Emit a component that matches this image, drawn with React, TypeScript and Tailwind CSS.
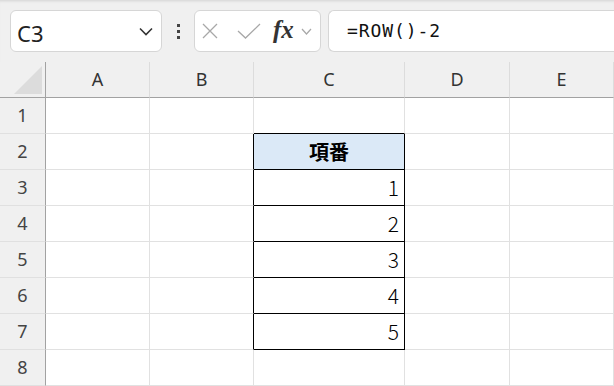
import React from 'react';

// ---------- constants ----------

const COLS = ['A', 'B', 'C', 'D', 'E'];
const ROWS = [1, 2, 3, 4, 5, 6, 7, 8];
const UI_FONT = { fontFamily: '"Noto Sans", "Open Sans", sans-serif' };
const JP_FONT = { fontFamily: '"Noto Sans CJK JP", "Noto Sans", sans-serif' };

// table sits in column C, rows 2..7
const TABLE: Record<number, string> = { 2: '項番', 3: '1', 4: '2', 5: '3', 6: '4', 7: '5' };

function inTable(row: number) {
  return row >= 2 && row <= 7;
}

// ---------- toolbar ----------

function Toolbar() {
  return (
    <div className="h-[62px] flex items-start pt-[10px] pl-[10px] gap-0 bg-[#f0f0f0] shadow-[inset_0_3px_3px_-2px_rgba(0,0,0,0.12)]">
      {/* name box */}
      <div className="w-[152px] h-[42px] bg-white border border-[#d6d6d6] rounded-[6px] flex items-center pl-[6px] pr-[8px]">
        <span className="text-[22px] text-[#222] leading-none pt-[3px]" style={UI_FONT}>
          C3
        </span>
        <svg className="ml-auto" width="14" height="9" viewBox="0 0 14 9">
          <path d="M1 1.5 L7 7.5 L13 1.5" fill="none" stroke="#333" strokeWidth="1.6" />
        </svg>
      </div>

      {/* more dots */}
      <div className="w-[32px] h-[42px] flex flex-col items-center justify-center gap-[3px]">
        <span className="w-[3px] h-[3px] bg-[#444]" />
        <span className="w-[3px] h-[3px] bg-[#444]" />
        <span className="w-[3px] h-[3px] bg-[#444]" />
      </div>

      {/* cancel / enter / fx */}
      <div className="w-[127px] h-[42px] bg-white border border-[#d6d6d6] rounded-[6px] flex items-center pl-[7px]">
        <svg width="16" height="16" viewBox="0 0 16 16">
          <path d="M1 1 L15 15 M15 1 L1 15" stroke="#a8a8a8" strokeWidth="1.3" />
        </svg>
        <svg className="ml-[19px]" width="24" height="16" viewBox="0 0 24 16">
          <path d="M1 8 L8.5 15 L23 1" fill="none" stroke="#a8a8a8" strokeWidth="1.3" />
        </svg>
        <span
          className="ml-[12px] text-[25px] italic font-bold text-[#333] leading-none -mt-[3px]"
          style={{ fontFamily: '"Liberation Serif", "DejaVu Serif", serif' }}
        >
          fx
        </span>
        <svg className="ml-[7px]" width="11" height="7" viewBox="0 0 11 7">
          <path d="M1 1 L5.5 6 L10 1" fill="none" stroke="#a8a8a8" strokeWidth="1.2" />
        </svg>
      </div>

      {/* formula bar */}
      <div className="ml-[7px] flex-1 h-[42px] bg-white border border-[#d6d6d6] border-r-0 rounded-l-[6px] flex items-center pl-[18px]">
        <span
          className="text-[18px] tracking-[0.9px] text-[#111] leading-none"
          style={{ fontFamily: '"DejaVu Sans Mono", "Liberation Mono", monospace' }}
        >
          =ROW()-2
        </span>
      </div>
    </div>
  );
}

// ---------- grid ----------

function Corner() {
  return (
    <div className="h-[36px] bg-[#f0f0f0] border-r border-b border-[#a2a2a2] flex items-end justify-end pr-[3px] pb-[3px]">
      <svg width="28" height="28" viewBox="0 0 28 28">
        <path d="M28 0 L28 28 L0 28 Z" fill="#dcdcdc" />
      </svg>
    </div>
  );
}

function Sheet() {
  return (
    <div
      className="grid bg-white"
      style={{ gridTemplateColumns: '46px 104px 104px 151px 105px 1fr' }}
    >
      <Corner />
      {COLS.map((c) => (
        <div
          key={c}
          className="h-[36px] bg-[#f0f0f0] border-b border-b-[#a2a2a2] border-r border-r-[#dcdcdc] flex items-center justify-center text-[18px] text-[#333]"
          style={UI_FONT}
        >
          {c}
        </div>
      ))}

      {ROWS.map((r) => (
        <React.Fragment key={r}>
          <div
            className="h-[36px] bg-[#f0f0f0] border-r border-r-[#a2a2a2] border-b border-b-[#e0e0e0] flex items-center justify-center text-[18px] text-[#444]"
            style={UI_FONT}
          >
            {r}
          </div>
          {COLS.map((c) => {
            // table borders go black
            let cls = 'h-[36px] border-r border-b border-[#e1e1e1]';
            if (c === 'B' && inTable(r)) cls = 'h-[36px] border-b border-b-[#e1e1e1] border-r border-r-black';
            if (c === 'C' && r === 1) cls = 'h-[36px] border-r border-r-[#e1e1e1] border-b border-b-black';
            if (c === 'C' && inTable(r)) {
              const head = r === 2;
              return (
                <div
                  key={c}
                  className={`h-[36px] border-r border-b border-black flex items-center ${
                    head ? 'justify-center bg-[#dbe9f7] font-bold text-[20px]' : 'justify-end pr-[5px] text-[21px] font-light'
                  } text-black`}
                  style={JP_FONT}
                >
                  {TABLE[r]}
                </div>
              );
            }
            return <div key={c} className={cls} />;
          })}
        </React.Fragment>
      ))}
    </div>
  );
}

export default function App() {
  return (
    <div className="w-[614px] h-[386px] overflow-hidden bg-white">
      <Toolbar />
      <Sheet />
    </div>
  );
}
